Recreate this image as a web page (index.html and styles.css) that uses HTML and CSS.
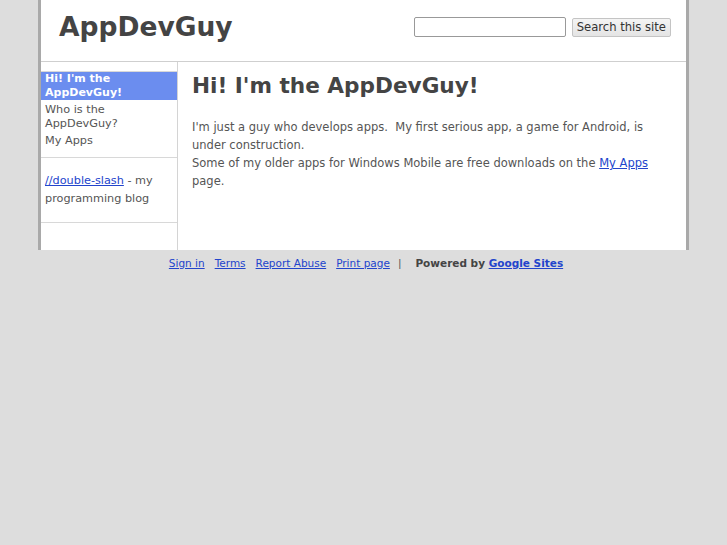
FILE: index.html
```html
<!DOCTYPE html>
<html>
<head>
<meta charset="utf-8">
<title>AppDevGuy</title>
<link rel="stylesheet" href="styles.css">
</head>
<body>
<div class="page">
  <div class="header">
    <div class="site-title">AppDevGuy</div>
    <form class="search">
      <input class="search-input" type="text">
      <button class="search-btn" type="button">Search this site</button>
    </form>
  </div>
  <div class="body">
    <div class="sidebar">
      <ul class="nav">
        <li class="nav-item current">Hi! I'm the AppDevGuy!</li>
        <li class="nav-item">Who is the AppDevGuy?</li>
        <li class="nav-item">My Apps</li>
      </ul>
      <div class="side-box">
        <a href="#">//double-slash</a> - my programming blog
      </div>
    </div>
    <div class="main">
      <h1 class="page-title">Hi! I'm the AppDevGuy!</h1>
      <p class="content">I'm just a guy who develops apps.&nbsp; My first serious app, a game for Android, is under construction.<br>Some of my older apps for Windows Mobile are free downloads on the <a href="#">My Apps</a> page.</p>
    </div>
  </div>
</div>
<div class="footer">
  <a href="#">Sign in</a><a href="#">Terms</a><a href="#">Report Abuse</a><a href="#">Print page</a><span class="sep">|</span><span class="powered">Powered by <a href="#">Google Sites</a></span>
</div>
</body>
</html>
```
FILE: styles.css
```css
html, body {
  margin: 0;
  padding: 0;
  background: #dddddd;
  font-family: "DejaVu Sans", Verdana, sans-serif;
  color: #555;
}
.page {
  width: 645px;
  margin: 0 auto;
  background: #fff;
  border-left: 3px solid #a9a9a9;
  border-right: 3px solid #a9a9a9;
}
.header {
  height: 61px;
  border-bottom: 1px solid #cfcfcf;
  display: flex;
  align-items: flex-start;
  justify-content: space-between;
  padding: 0 15px 0 18px;
}
.site-title {
  font-size: 26.5px;
  font-weight: bold;
  color: #444;
  margin-top: 11px;
}
.search {
  display: flex;
  align-items: center;
  gap: 6px;
  margin: 17px 0 0 0;
}
.search-input {
  width: 148px;
  height: 16px;
  border: 1px solid #999;
  border-radius: 2px;
  padding: 1px;
  margin: 0;
}
.search-btn {
  font-family: "DejaVu Sans", sans-serif;
  font-size: 11.6px;
  color: #333;
  height: 19px;
  padding: 0 4px;
  background: linear-gradient(#f4f4f4, #e4e4e4);
  border: 1px solid #c4c4c4;
  border-radius: 2px;
  margin: 0;
}
.body {
  display: flex;
  min-height: 188px;
}
.sidebar {
  width: 136px;
  border-right: 1px solid #d4d4d4;
  padding-top: 9px;
  font-size: 11.25px;
}
.nav {
  list-style: none;
  margin: 0;
  padding: 0 0 6px 0;
  border-top: 1px solid #d8d8d8;
  border-bottom: 1px solid #d8d8d8;
}
.nav-item {
  padding: 0 4px;
  line-height: 14px;
  margin-bottom: 3px;
}
.nav-item.current {
  background: #6b8def;
  color: #fff;
  font-weight: bold;
  font-size: 11px;
}
.side-box {
  padding: 14px 4px 14px 4px;
  line-height: 18px;
  border-bottom: 1px solid #d8d8d8;
}
.side-box a {
  color: #2244cc;
}
.main {
  flex: 1;
  padding: 0 14px;
}
.page-title {
  font-size: 21.6px;
  font-weight: bold;
  color: #444;
  margin: 11px 0 0 0;
  line-height: 26px;
}
.content {
  font-size: 11.5px;
  line-height: 18px;
  margin: 19px 0 0 0;
}
.content a {
  color: #2244cc;
}
.footer {
  text-align: center;
  font-size: 10.5px;
  padding-top: 7px;
  color: #555;
}
.footer a {
  color: #2244cc;
  margin: 0 5px;
}
.footer .sep {
  margin: 0 14px 0 3px;
}
.powered {
  font-weight: bold;
  color: #444;
}
.powered a {
  margin: 0;
}
```
